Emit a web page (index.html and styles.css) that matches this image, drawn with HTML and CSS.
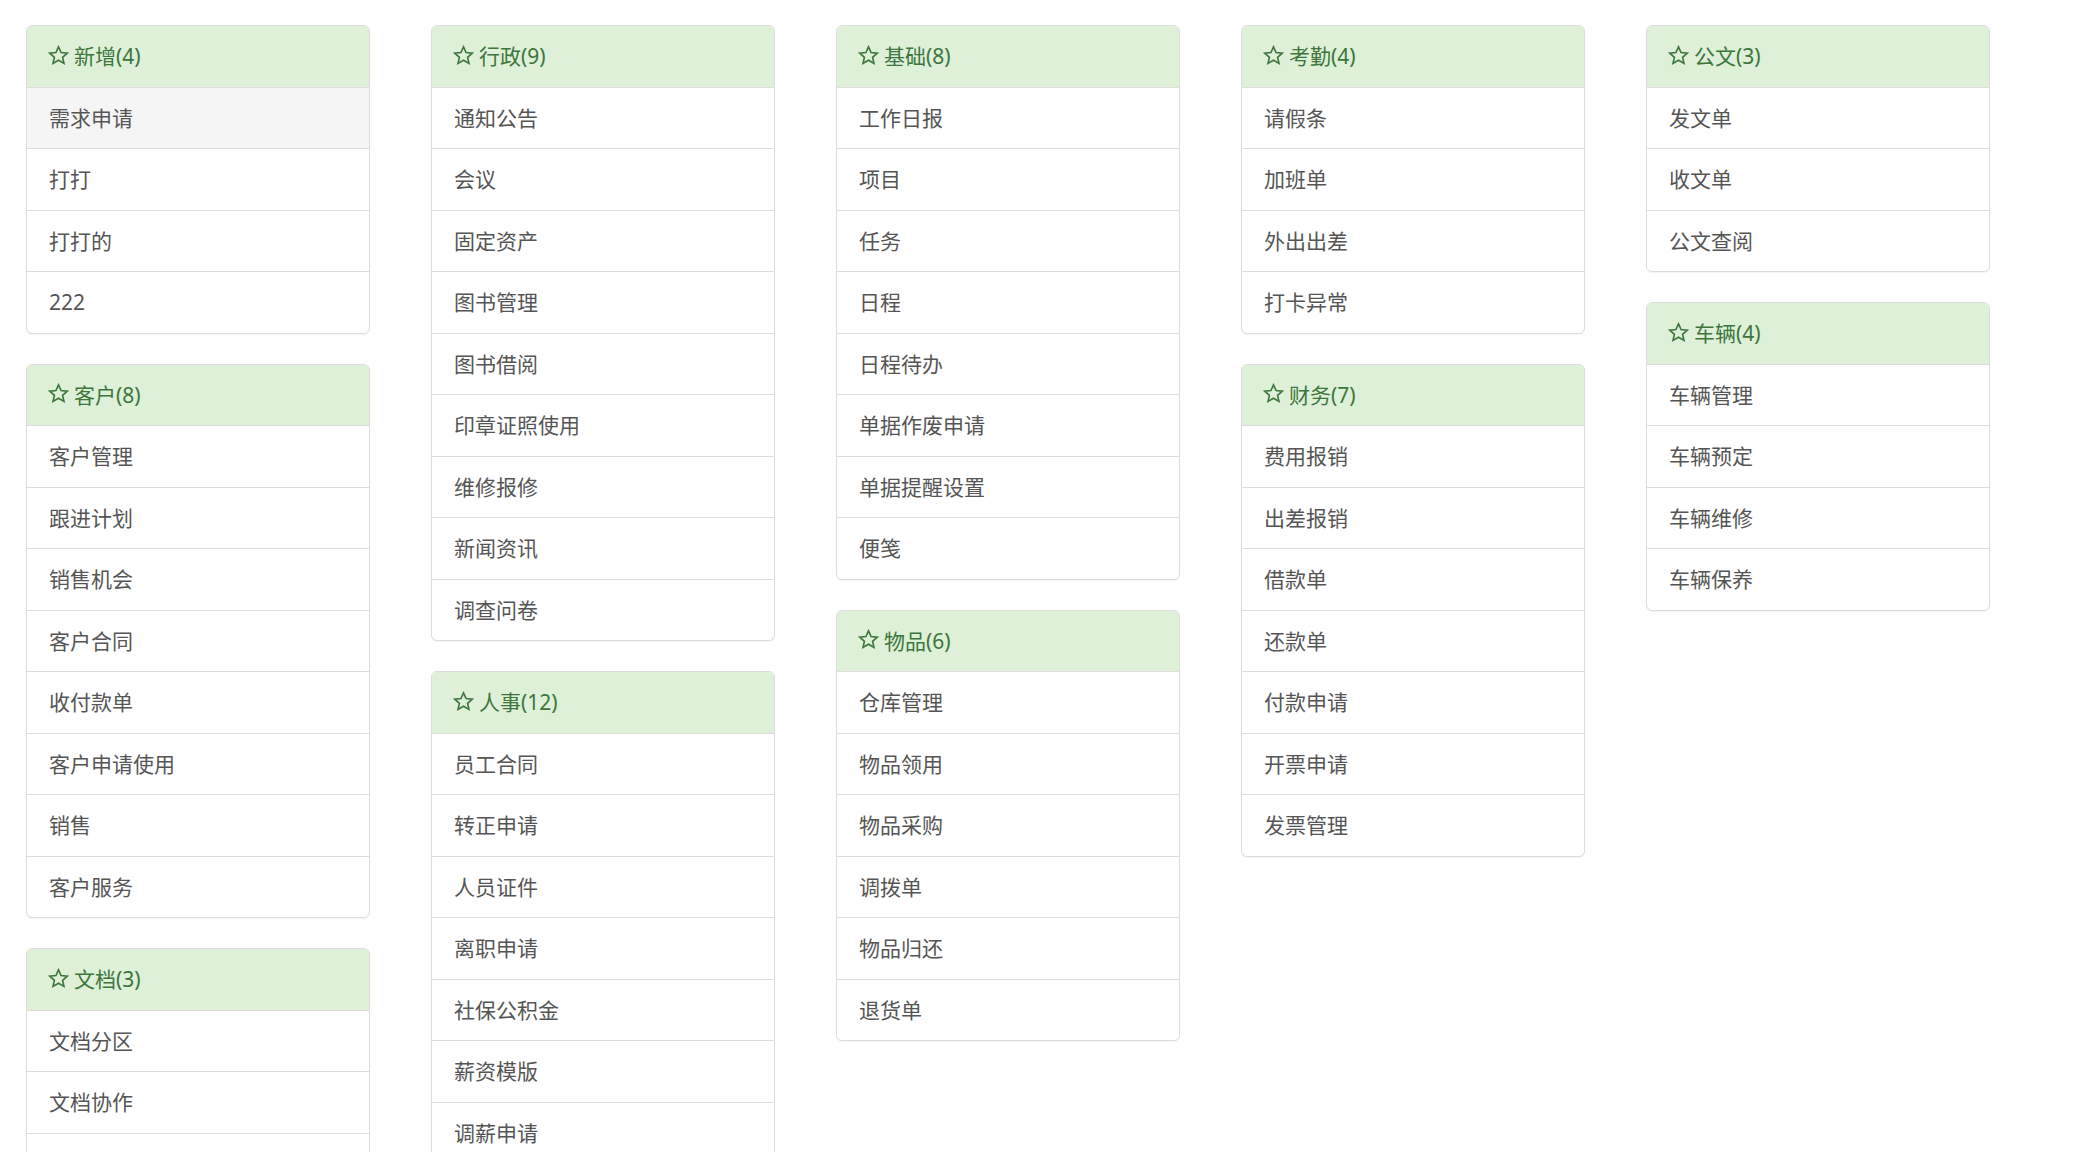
FILE: index.html
```html
<!DOCTYPE html>
<html>
<head>
<meta charset="utf-8" />
<title>流程</title>
<link rel="stylesheet" href="styles.css">
</head>
<body>
<div class="wrap">

<div class="col">
	<div class="panel">
		<div class="panel_head"><svg class="star" viewBox="0 0 18 18"><path d="M9 1.6l2.2 4.9 5.3.5-4 3.6 1.2 5.2L9 13.1l-4.7 2.7 1.2-5.2-4-3.6 5.3-.5z"/></svg>新增(4)</div>
		<a class="item on">需求申请</a>
		<a class="item">打打</a>
		<a class="item">打打的</a>
		<a class="item">222</a>
	</div>
	<div class="panel">
		<div class="panel_head"><svg class="star" viewBox="0 0 18 18"><path d="M9 1.6l2.2 4.9 5.3.5-4 3.6 1.2 5.2L9 13.1l-4.7 2.7 1.2-5.2-4-3.6 5.3-.5z"/></svg>客户(8)</div>
		<a class="item">客户管理</a>
		<a class="item">跟进计划</a>
		<a class="item">销售机会</a>
		<a class="item">客户合同</a>
		<a class="item">收付款单</a>
		<a class="item">客户申请使用</a>
		<a class="item">销售</a>
		<a class="item">客户服务</a>
	</div>
	<div class="panel">
		<div class="panel_head"><svg class="star" viewBox="0 0 18 18"><path d="M9 1.6l2.2 4.9 5.3.5-4 3.6 1.2 5.2L9 13.1l-4.7 2.7 1.2-5.2-4-3.6 5.3-.5z"/></svg>文档(3)</div>
		<a class="item">文档分区</a>
		<a class="item">文档协作</a>
		<a class="item">我的文档</a>
	</div>
</div>

<div class="col">
	<div class="panel">
		<div class="panel_head"><svg class="star" viewBox="0 0 18 18"><path d="M9 1.6l2.2 4.9 5.3.5-4 3.6 1.2 5.2L9 13.1l-4.7 2.7 1.2-5.2-4-3.6 5.3-.5z"/></svg>行政(9)</div>
		<a class="item">通知公告</a>
		<a class="item">会议</a>
		<a class="item">固定资产</a>
		<a class="item">图书管理</a>
		<a class="item">图书借阅</a>
		<a class="item">印章证照使用</a>
		<a class="item">维修报修</a>
		<a class="item">新闻资讯</a>
		<a class="item">调查问卷</a>
	</div>
	<div class="panel">
		<div class="panel_head"><svg class="star" viewBox="0 0 18 18"><path d="M9 1.6l2.2 4.9 5.3.5-4 3.6 1.2 5.2L9 13.1l-4.7 2.7 1.2-5.2-4-3.6 5.3-.5z"/></svg>人事(12)</div>
		<a class="item">员工合同</a>
		<a class="item">转正申请</a>
		<a class="item">人员证件</a>
		<a class="item">离职申请</a>
		<a class="item">社保公积金</a>
		<a class="item">薪资模版</a>
		<a class="item">调薪申请</a>
		<a class="item">奖惩记录</a>
		<a class="item">培训管理</a>
		<a class="item">考核管理</a>
		<a class="item">人事调动</a>
		<a class="item">招聘需求</a>
	</div>
</div>

<div class="col">
	<div class="panel">
		<div class="panel_head"><svg class="star" viewBox="0 0 18 18"><path d="M9 1.6l2.2 4.9 5.3.5-4 3.6 1.2 5.2L9 13.1l-4.7 2.7 1.2-5.2-4-3.6 5.3-.5z"/></svg>基础(8)</div>
		<a class="item">工作日报</a>
		<a class="item">项目</a>
		<a class="item">任务</a>
		<a class="item">日程</a>
		<a class="item">日程待办</a>
		<a class="item">单据作废申请</a>
		<a class="item">单据提醒设置</a>
		<a class="item">便笺</a>
	</div>
	<div class="panel">
		<div class="panel_head"><svg class="star" viewBox="0 0 18 18"><path d="M9 1.6l2.2 4.9 5.3.5-4 3.6 1.2 5.2L9 13.1l-4.7 2.7 1.2-5.2-4-3.6 5.3-.5z"/></svg>物品(6)</div>
		<a class="item">仓库管理</a>
		<a class="item">物品领用</a>
		<a class="item">物品采购</a>
		<a class="item">调拨单</a>
		<a class="item">物品归还</a>
		<a class="item">退货单</a>
	</div>
</div>

<div class="col">
	<div class="panel">
		<div class="panel_head"><svg class="star" viewBox="0 0 18 18"><path d="M9 1.6l2.2 4.9 5.3.5-4 3.6 1.2 5.2L9 13.1l-4.7 2.7 1.2-5.2-4-3.6 5.3-.5z"/></svg>考勤(4)</div>
		<a class="item">请假条</a>
		<a class="item">加班单</a>
		<a class="item">外出出差</a>
		<a class="item">打卡异常</a>
	</div>
	<div class="panel">
		<div class="panel_head"><svg class="star" viewBox="0 0 18 18"><path d="M9 1.6l2.2 4.9 5.3.5-4 3.6 1.2 5.2L9 13.1l-4.7 2.7 1.2-5.2-4-3.6 5.3-.5z"/></svg>财务(7)</div>
		<a class="item">费用报销</a>
		<a class="item">出差报销</a>
		<a class="item">借款单</a>
		<a class="item">还款单</a>
		<a class="item">付款申请</a>
		<a class="item">开票申请</a>
		<a class="item">发票管理</a>
	</div>
</div>

<div class="col">
	<div class="panel">
		<div class="panel_head"><svg class="star" viewBox="0 0 18 18"><path d="M9 1.6l2.2 4.9 5.3.5-4 3.6 1.2 5.2L9 13.1l-4.7 2.7 1.2-5.2-4-3.6 5.3-.5z"/></svg>公文(3)</div>
		<a class="item">发文单</a>
		<a class="item">收文单</a>
		<a class="item">公文查阅</a>
	</div>
	<div class="panel">
		<div class="panel_head"><svg class="star" viewBox="0 0 18 18"><path d="M9 1.6l2.2 4.9 5.3.5-4 3.6 1.2 5.2L9 13.1l-4.7 2.7 1.2-5.2-4-3.6 5.3-.5z"/></svg>车辆(4)</div>
		<a class="item">车辆管理</a>
		<a class="item">车辆预定</a>
		<a class="item">车辆维修</a>
		<a class="item">车辆保养</a>
	</div>
</div>

</div>
</body>
</html>
```
FILE: styles.css
```css
body{
	margin:0;
	background:#fff;
	font-family:"Noto Sans","Noto Sans CJK SC",sans-serif;
	font-size:21px;
	color:#555;
}

.wrap{
	display:flex;
	align-items:flex-start;
	gap:61px;
	padding:25px 0 0 25.5px;
}

.col{
	width:344px;
	flex:none;
}

.panel{
	border:1px solid #ddd;
	border-radius:6px;
	margin-bottom:30px;
	background:#fff;
	box-shadow:0 1px 1px rgba(0,0,0,.05);
	overflow:hidden;
}

.panel_head{
	display:flex;
	align-items:center;
	padding:15px 22.5px;
	line-height:30.5px;
	background:#dff0d8;
	color:#3c763d;
	border-bottom:1px solid #ddd;
}

.star{
	width:21px;
	height:21px;
	margin:-2px 5px 0 -1px;
	fill:none;
	stroke:#3c763d;
	stroke-width:1.4;
	stroke-linejoin:miter;
}

.item{
	display:block;
	padding:15px 22.5px;
	line-height:30.5px;
	color:#555;
	text-decoration:none;
}

.item + .item{
	border-top:1px solid #ddd;
}

.on{
	background:#f5f5f5;
}
```
